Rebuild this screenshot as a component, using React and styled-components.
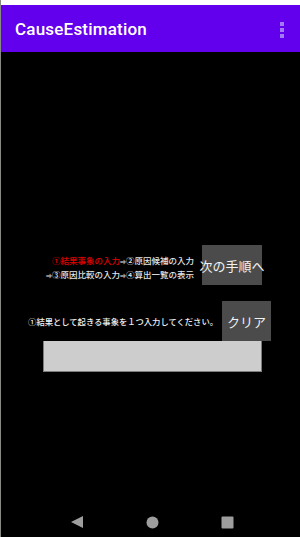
import React from "react";
import styled, { createGlobalStyle } from "styled-components";

const Global = createGlobalStyle`
  html, body { margin: 0; padding: 0; background: #000; }
  body { font-family: "Noto Sans CJK JP", "Noto Sans", Roboto, sans-serif; }
`;

const Screen = styled.div`
  width: 300px;
  height: 537px;
  display: flex;
  flex-direction: column;
  background: #000;
  border-left: 1px solid #8a8a84;
  box-sizing: border-box;
  overflow: hidden;
`;

const StatusStrip = styled.div`
  height: 5px;
  background: #fff;
  flex: none;
`;

const AppBar = styled.header`
  height: 47px;
  flex: none;
  background: #6200ee;
  display: flex;
  align-items: center;
  justify-content: space-between;
  padding: 0 16px 0 14px;
`;

const Title = styled.h1`
  margin: 0;
  color: #fff;
  font-family: Roboto, "Noto Sans", sans-serif;
  font-weight: 500;
  font-size: 17px;
  letter-spacing: 0.2px;
`;

const Dots = styled.div`
  display: flex;
  flex-direction: column;
  gap: 2px;
  margin-top: 3px;
`;

const Dot = styled.span`
  width: 4px;
  height: 4px;
  background: #a27af6;
`;

const Main = styled.main`
  flex: 1;
  display: flex;
  flex-direction: column;
  padding-top: 193px;
`;

const Row = styled.div`
  display: flex;
  justify-content: flex-end;
  align-items: center;
  gap: ${(p) => p.gap}px;
  padding-right: ${(p) => p.right}px;
  margin-top: ${(p) => p.top || 0}px;
`;

const Steps = styled.div`
  display: flex;
  flex-direction: column;
  align-items: flex-end;
  font-size: 8.5px;
  font-weight: 500;
  line-height: 12px;
  color: #e6e6e6;
  margin-top: 6px;
`;

const Red = styled.span`
  color: #e00000;
`;

const Arrow = styled.span`
  font-size: 6px;
`;

const GreyButton = styled.button`
  width: ${(p) => p.w}px;
  height: 40px;
  border: none;
  padding: 0;
  background: #4b4b4b;
  color: #f2f2f2;
  font-family: "Noto Sans CJK JP", sans-serif;
  font-size: 13px;
  white-space: nowrap;
  overflow: visible;
  display: flex;
  align-items: center;
  justify-content: center;
`;

const Prompt = styled.span`
  color: #f0f0f0;
  font-size: 8.3px;
  font-weight: 500;
  white-space: nowrap;
`;

const InputBox = styled.div`
  margin-left: 42px;
  width: 219px;
  height: 31px;
  box-sizing: border-box;
  background: #cdcdcd;
  border: 1px solid #7c7c7c;
  border-top: none;
`;

const NavBar = styled.nav`
  height: 40px;
  flex: none;
  display: flex;
  align-items: center;
  justify-content: space-between;
  padding: 10px 66px 0 69px;
  box-sizing: border-box;
`;

export default function App() {
  return (
    <>
      <Global />
      <Screen>
        <StatusStrip />
        <AppBar>
          <Title>CauseEstimation</Title>
          <Dots>
            <Dot />
            <Dot />
            <Dot />
          </Dots>
        </AppBar>
        <Main>
          <Row gap={8} right={38}>
            <Steps>
              <div>
                <Red>①結果事象の入力</Red>
                <Arrow>⇒</Arrow>②原因候補の入力
              </div>
              <div>
                <Arrow>⇒</Arrow>③原因比較の入力<Arrow>⇒</Arrow>④算出一覧の表示
              </div>
            </Steps>
            <GreyButton w={60}>次の手順へ</GreyButton>
          </Row>
          <Row gap={4} right={29} top={16}>
            <Prompt>①結果として起きる事象を１つ入力してください。</Prompt>
            <GreyButton w={49}>クリア</GreyButton>
          </Row>
          <InputBox />
        </Main>
        <NavBar>
          <svg width="14" height="14" viewBox="0 0 14 14">
            <polygon points="1,7 13,1 13,13" fill="#9e9e9e" />
          </svg>
          <svg width="13" height="13" viewBox="0 0 13 13">
            <circle cx="6.5" cy="6.5" r="6" fill="#9e9e9e" />
          </svg>
          <svg width="13" height="13" viewBox="0 0 13 13">
            <rect x="0.5" y="0.5" width="12" height="12" rx="1" fill="#9e9e9e" />
          </svg>
        </NavBar>
      </Screen>
    </>
  );
}
